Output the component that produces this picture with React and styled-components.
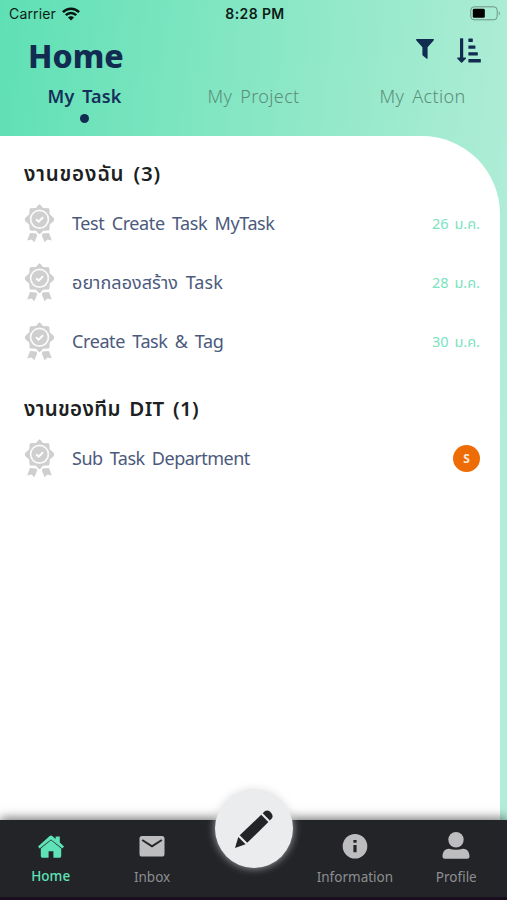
import React from 'react';
import styled, { createGlobalStyle } from 'styled-components';

const GlobalStyle = createGlobalStyle`
	* {
		box-sizing: border-box;
	}
	body {
		margin: 0;
		font-family: 'Noto Sans', 'Noto Sans Thai', sans-serif;
	}
`;

const Screen = styled.div`
	position: relative;
	display: flex;
	flex-direction: column;
	width: 507px;
	height: 900px;
	overflow: hidden;
	background: linear-gradient(97deg, #5fe0b4 0%, #8ee8c8 50%, #b2edd8 90%);
`;

const StatusBar = styled.div`
	display: grid;
	grid-template-columns: 1fr auto 1fr;
	align-items: center;
	height: 27px;
	padding: 0 6px 0 9px;
	font-family: Inter, sans-serif;
	font-size: 14px;
	letter-spacing: 0.15px;
	color: #0c1d18;
`;

const Carrier = styled.div`
	display: flex;
	align-items: center;
	gap: 6px;
`;

const Clock = styled.div`
	font-weight: 600;
	font-size: 14px;
	letter-spacing: 0.4px;
`;

const Battery = styled.svg`
	justify-self: end;
`;

const TitleRow = styled.div`
	display: flex;
	justify-content: space-between;
	height: 56px;
	padding: 0 26px 0 28px;
`;

const Title = styled.h1`
	margin: 8px 0 0;
	font-size: 32px;
	line-height: 42px;
	font-weight: 800;
	letter-spacing: 0;
	color: #122b50;
`;

const Actions = styled.div`
	display: flex;
	align-items: flex-start;
	gap: 23px;
	padding-top: 11px;
`;

const Tabs = styled.div`
	display: grid;
	grid-template-columns: repeat(3, 1fr);
	height: 53px;
`;

const Tab = styled.div`
	display: flex;
	flex-direction: column;
	align-items: center;
	font-size: 18px;
	line-height: 26px;
	font-weight: ${props => (props.$active ? 600 : 350)};
	letter-spacing: ${props => (props.$active ? 0.1 : 0.35)}px;
	word-spacing: 3px;
	color: ${props => (props.$active ? '#14305a' : '#5b8e7b')};
`;

const Dot = styled.span`
	width: 9px;
	height: 9px;
	margin-top: 5px;
	border-radius: 50%;
	background: #122b50;
`;

const Sheet = styled.main`
	flex: 1;
	margin-right: 7px;
	padding: 20px 20px 0 24px;
	border-top-right-radius: 78px;
	background: #ffffff;
`;

const Group = styled.section`
	margin-bottom: 20px;
`;

const GroupTitle = styled.h2`
	margin: 0;
	height: 38px;
	font-size: 20.5px;
	line-height: 35px;
	font-weight: 600;
	letter-spacing: ${props => props.$spacing}px;
	word-spacing: 3px;
	color: #1d1f23;
	white-space: nowrap;
`;

const TaskRow = styled.div`
	display: flex;
	align-items: center;
	height: 59px;
`;

const TaskName = styled.div`
	flex: 1;
	margin: -2px 0 0 17px;
	font-size: 18px;
	line-height: 28px;
	font-weight: 400;
	letter-spacing: ${props => props.$spacing}px;
	word-spacing: 3px;
	color: #4b5a7c;
`;

const TaskDate = styled.div`
	font-size: 14.5px;
	line-height: 20px;
	padding-bottom: 1px;
	word-spacing: 2px;
	color: #7be3c0;
`;

const Avatar = styled.div`
	display: flex;
	align-items: center;
	justify-content: center;
	width: 27px;
	height: 27px;
	border-radius: 50%;
	font-size: 12px;
	font-weight: 700;
	color: #fbe9dc;
	background: #ee6c05;
`;

const NavBar = styled.nav`
	display: grid;
	grid-template-columns: repeat(5, 1fr);
	height: 80px;
	border-bottom: 3px solid #1a0d1e;
	background: #222428;
	box-shadow: 0 -2px 10px rgba(0, 0, 0, 0.55);
`;

const NavItem = styled.div`
	display: flex;
	flex-direction: column;
	align-items: center;
	padding-top: 11px;
	font-size: 13.5px;
	line-height: 20px;
	font-weight: ${props => (props.$active ? 500 : 400)};
	color: ${props => (props.$active ? '#5fe3b6' : '#8d8e91')};

	svg {
		margin-bottom: ${props => (props.$active ? 5 : 6)}px;
	}
`;

const EditButton = styled.div`
	position: absolute;
	left: 215px;
	bottom: 32px;
	display: flex;
	align-items: center;
	justify-content: center;
	width: 78px;
	height: 79px;
	border-radius: 50%;
	background: #ebeced;
	box-shadow: 0 0 9px rgba(215, 215, 218, 0.75);
`;

const WifiIcon = () => (
	<svg width="18" height="14" viewBox="0 0 18 14" fill="none" stroke="#081410" strokeWidth="2.5">
		<path d="M0.9 5.2C5.4 0.6 12.6 0.6 17.1 5.2" />
		<path d="M3.8 8.2C6.7 5.2 11.3 5.2 14.2 8.2" />
		<path d="M6 10.5C7.6 8.7 10.4 8.7 12 10.5L9 13.6Z" fill="#081410" stroke="none" />
	</svg>
);

const FilterIcon = () => (
	<svg width="18" height="22" viewBox="0 0 18 22" fill="#122b50">
		<path d="M0.5 1H17.5Q18.3 1.6 17.6 2.4L11.6 9.2V20.2Q11.4 21.2 10.4 20.6L7 17.8Q6.4 17.3 6.4 16.5V9.2L0.4 2.4Q-0.3 1.6 0.5 1Z" />
	</svg>
);

const SortIcon = () => (
	<svg width="24" height="26" viewBox="0 0 24 26" fill="#122b50">
		<path d="M3 0.8Q3 0.3 3.5 0.3H5.7Q6.2 0.3 6.2 0.8V19.5H8.3Q9.6 19.7 8.8 20.7L5.2 24.5Q4.6 25 4 24.5L0.4 20.7Q-0.4 19.7 0.9 19.5H3Z" />
		<rect x="11.4" y="0.6" width="4.4" height="3.4" rx="0.5" />
		<rect x="11.4" y="7.4" width="7" height="3.4" rx="0.5" />
		<rect x="11.4" y="14.2" width="9.4" height="3.4" rx="0.5" />
		<rect x="11.4" y="21" width="12.4" height="3.4" rx="0.5" />
	</svg>
);

const MedalIcon = () => (
	<svg width="31" height="39" viewBox="0 0 31 39">
		<g fill="#cfcfcf">
			<path d="M15.5 0.3Q16.8 0.8 19 4L24.6 4.3Q25.8 5 25.6 10L30 14.2Q30.6 15.8 29.6 17.2L25.8 20.6L25.4 25.4Q25 26.6 23.6 26.6L19 26.8Q16.8 30 15.5 30.2Q14.2 30 12 26.8L7.4 26.6Q6 26.6 5.6 25.4L5.2 20.6L1.4 17.2Q0.4 15.8 1 14.2L5.4 10Q5.2 5 6.4 4.3L12 4Q14.2 0.8 15.5 0.3Z" />
			<path d="M6 29L12.4 29.4L13.2 31.5L10.4 38.2L7.5 35.5L3.2 36.6Z" />
			<path d="M25 29L18.6 29.4L17.8 31.5L20.6 38.2L23.5 35.5L27.8 36.6Z" />
		</g>
		<circle cx="15.5" cy="15.3" r="8.9" fill="none" stroke="#fafafa" strokeWidth="1.7" />
		<path d="M12.1 15.3L14.6 17.6L19.1 13.2" fill="none" stroke="#ffffff" strokeWidth="1.9" />
	</svg>
);

const HomeIcon = () => (
	<svg width="28" height="30" viewBox="0 0 28 30" fill="#5fe3b6">
		<path d="M14 4.6Q14.7 4.6 15.3 5.1L18.6 8V5.4H22.8V11.6L27 15.5L25.4 17.5L14 8.4L2.6 17.5L1 15.5L12.7 5.1Q13.3 4.6 14 4.6Z" />
		<path d="M14 9.3L24.2 17.4V25.3Q24.2 26.7 22.8 26.7H16.4V20.2H11.6V26.7H5.2Q3.8 26.7 3.8 25.3V17.4Z" />
	</svg>
);

const MailIcon = () => (
	<svg width="26" height="30" viewBox="0 0 26 30">
		<rect x="0.5" y="5" width="25" height="20.5" rx="2.6" fill="#bdbdbf" />
		<path d="M3.2 9L13 15.4L22.8 9" fill="none" stroke="#222428" strokeWidth="2" />
	</svg>
);

const InfoIcon = () => (
	<svg width="26" height="30" viewBox="0 0 26 30">
		<circle cx="13" cy="15.3" r="12.3" fill="#bdbdbf" />
		<path d="M11.4 9H14.6V11.7H11.4ZM11.4 13.9H14.6V21.3H11.4Z" fill="#222428" />
	</svg>
);

const ProfileIcon = () => (
	<svg width="28" height="30" viewBox="0 0 28 30" fill="#bdbdbf">
		<circle cx="14" cy="8.7" r="7.7" />
		<path d="M0.5 25.5C0.5 20.5 3 17.7 7 17.7Q14 20 21 17.7C25 17.7 27.5 20.5 27.5 25.5Q27.5 27.7 25.3 27.7H2.7Q0.5 27.7 0.5 25.5Z" />
	</svg>
);

const PencilIcon = () => (
	<svg width="40" height="40" viewBox="0 0 40 40" fill="#222428">
		<path d="M1 39L4.3 28L11.6 35.3Z" />
		<path d="M5.7 26.3L27.2 5.8L34.4 13L13.2 33.8Z" />
		<path d="M28.7 4.3L31 2.1Q33.6 0.5 36.2 2.8Q39.6 6.3 38.2 8.9L35.8 11.4Z" />
	</svg>
);

const groups = [
	{
		id: 1,
		title: 'งานของฉัน (3)',
		spacing: 0.8,
		tasks: [
			{ id: 1, name: 'Test Create Task MyTask', date: '26 ม.ค.', spacing: -0.4 },
			{ id: 2, name: 'อยากลองสร้าง Task', date: '28 ม.ค.', spacing: 0.05 },
			{ id: 3, name: 'Create Task & Tag', date: '30 ม.ค.', spacing: -0.4 },
		],
	},
	{
		id: 2,
		title: 'งานของทีม DIT (1)',
		spacing: 0.3,
		tasks: [{ id: 4, name: 'Sub Task Department', owner: 'S', spacing: -0.5 }],
	},
];

const App = () => {
	return (
		<>
			<GlobalStyle />
			<Screen>
				<StatusBar>
					<Carrier>
						Carrier
						<WifiIcon />
					</Carrier>
					<Clock>8:28 PM</Clock>
					<Battery width="31" height="15" viewBox="0 0 31 15">
						<rect x="0.8" y="0.8" width="26.4" height="13" rx="3.4" fill="none" stroke="#6f9485" />
						<rect x="2.8" y="2.8" width="12" height="9" rx="1.4" fill="#000000" />
						<path d="M28.8 5Q30.8 7.3 28.8 9.6Z" fill="#6f9485" />
					</Battery>
				</StatusBar>
				<TitleRow>
					<Title>Home</Title>
					<Actions>
						<FilterIcon />
						<SortIcon />
					</Actions>
				</TitleRow>
				<Tabs>
					<Tab $active>
						My Task
						<Dot />
					</Tab>
					<Tab>My Project</Tab>
					<Tab>My Action</Tab>
				</Tabs>
				<Sheet>
					{groups.map(group => (
						<Group key={group.id}>
							<GroupTitle $spacing={group.spacing}>{group.title}</GroupTitle>
							{group.tasks.map(task => (
								<TaskRow key={task.id}>
									<MedalIcon />
									<TaskName $spacing={task.spacing}>{task.name}</TaskName>
									{task.date && <TaskDate>{task.date}</TaskDate>}
									{task.owner && <Avatar>{task.owner}</Avatar>}
								</TaskRow>
							))}
						</Group>
					))}
				</Sheet>
				<NavBar>
					<NavItem $active>
						<HomeIcon />
						Home
					</NavItem>
					<NavItem>
						<MailIcon />
						Inbox
					</NavItem>
					<span />
					<NavItem>
						<InfoIcon />
						Information
					</NavItem>
					<NavItem>
						<ProfileIcon />
						Profile
					</NavItem>
				</NavBar>
				<EditButton>
					<PencilIcon />
				</EditButton>
			</Screen>
		</>
	);
};

export default App;
